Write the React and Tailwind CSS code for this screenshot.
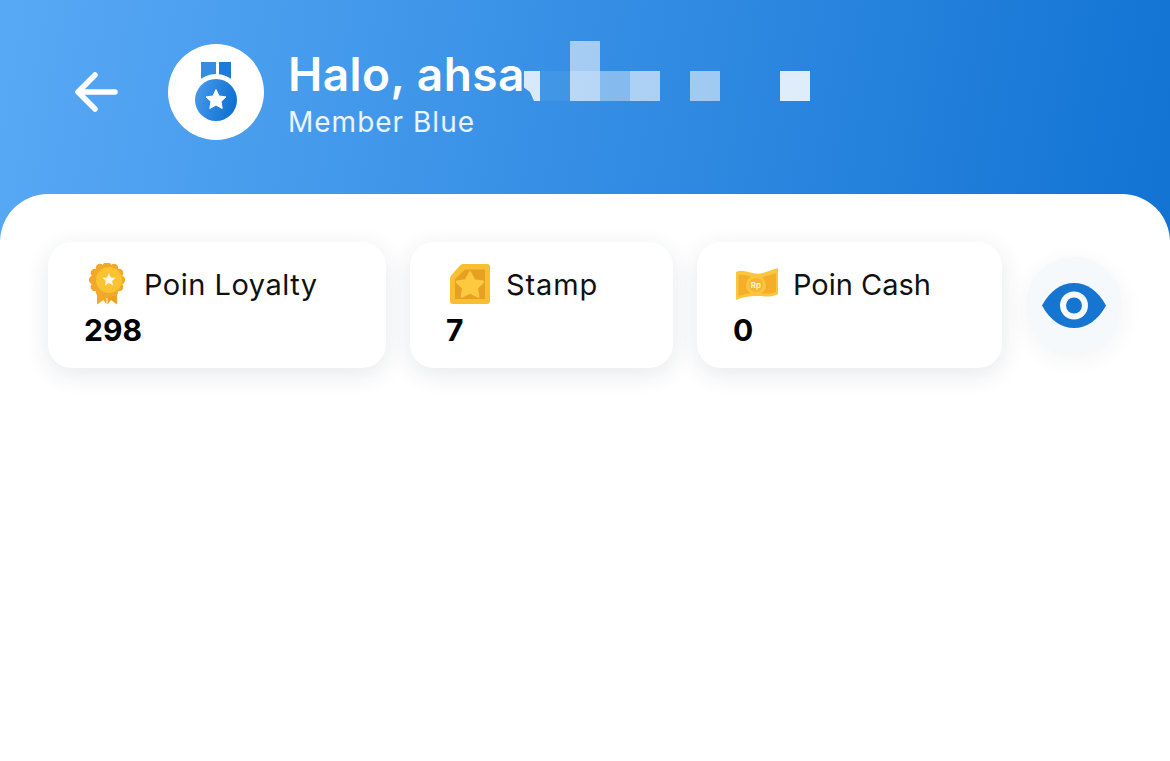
import React from 'react';

const cards = [
    { label: 'Poin Loyalty', value: '298', icon: <LoyaltyIcon />, width: 'w-[338px]', rowClass: 'pl-[2px]', labelClass: 'ml-[17px] tracking-[0.5px]' },
    { label: 'Stamp', value: '7', icon: <StampIcon />, width: 'w-[263px]', rowClass: 'pl-[2px]', labelClass: 'ml-[15px] tracking-[0.9px]' },
    { label: 'Poin Cash', value: '0', icon: <CashIcon />, width: 'w-[305px]', rowClass: 'pl-[1px]', labelClass: 'ml-[14px]' },
];

// censor blocks sitting over the name
const blocks = [
    { className: 'left-[540px] top-[71px] h-[30px] w-[30px] bg-white/5' },
    { className: 'left-[570px] top-[41px] h-[30px] w-[30px] bg-white/55' },
    { className: 'left-[570px] top-[71px] h-[30px] w-[30px] bg-white/65' },
    { className: 'left-[600px] top-[71px] h-[30px] w-[30px] bg-white/40' },
    { className: 'left-[630px] top-[71px] h-[30px] w-[30px] bg-white/60' },
    { className: 'left-[690px] top-[71px] h-[30px] w-[30px] bg-white/55' },
    { className: 'left-[780px] top-[71px] h-[30px] w-[30px] bg-white/85' },
];

const scallops = Array.from({ length: 12 }, (_, i) => {
    const angle = (i * Math.PI) / 6;
    return { cx: 20 + Math.cos(angle) * 14, cy: 17 + Math.sin(angle) * 14 };
});

function LoyaltyIcon() {
    return (
        <svg width="40" height="42" viewBox="0 0 40 42" className="shrink-0">
            <path d="M10 24 L10 41.500 L16.500 37 L19.500 41.500 L19.500 24 Z" fill="#f2a923" />
            <path d="M20.500 24 L20.500 41.500 L24 37 L30 41.500 L30 24 Z" fill="#eea01f" />
            {scallops.map((s, i) => (
                <circle key={i} cx={s.cx} cy={s.cy} r="4.200" fill="#f0a92a" />
            ))}
            <circle cx="20" cy="17" r="14.500" fill="#f0a92a" />
            <circle cx="22" cy="17" r="13" fill="#fbc331" />
            <path d="M22 10 L23.900 14.400 L28.600 14.800 L25.100 17.900 L26.100 22.500 L22 20.100 L17.900 22.500 L18.900 17.900 L15.400 14.800 L20.100 14.400 Z" fill="#fff8e6" strokeLinejoin="round" />
        </svg>
    );
}

function StampIcon() {
    return (
        <svg width="42" height="42" viewBox="0 0 42 42" className="shrink-0">
            <path d="M14 1 H38 Q41 1 41 4 V38 Q41 41 38 41 H4 Q1 41 1 38 V16 Q1 13.500 3 11.500 L10.500 3 Q12 1 14 1 Z" fill="#f9bf31" />
            <path d="M16 6.500 H36 V36 H6 V16 Z" fill="#e7a024" />
            <path d="M21 9.500 L25.200 17.500 L34 18.800 L27.700 25 L29.200 33.500 L21 29.500 L12.800 33.500 L14.300 25 L8 18.800 L16.800 17.500 Z" fill="#fdc93f" stroke="#fdc93f" strokeWidth="2.500" strokeLinejoin="round" />
        </svg>
    );
}

function CashIcon() {
    return (
        <svg width="44" height="34" viewBox="0 0 44 34" className="shrink-0">
            <path d="M1 5 C9 1 18 9 28 6 C34 4 39 2 43 1 V27 C36 31 30 29 22 29 C14 29 8 30 1 33 Z" fill="#fcc53e" />
            <path d="M3.500 8 C11 6 18 13 28 10 C33 9 37 7 41 6 V25 C35 28 29 26 22 26 C14 26 9 27 3.500 29 Z" fill="#f4ae29" />
            <circle cx="21" cy="18" r="10" fill="#fcc53e" />
            <circle cx="21" cy="18" r="7" fill="#f6b62f" />
            <text x="21" y="21" textAnchor="middle" fontSize="8" fontWeight="700" fill="#fff3cf" fontFamily="Inter, sans-serif">Rp</text>
        </svg>
    );
}

function MedalIcon() {
    return (
        <svg width="62" height="66" viewBox="0 0 62 66">
            <defs>
                <linearGradient id="medalFill" x1="0" y1="0" x2="1" y2="0.300">
                    <stop offset="0" stopColor="#4a9dec" />
                    <stop offset="1" stopColor="#1272d3" />
                </linearGradient>
            </defs>
            <rect x="16" y="1" width="15" height="23" fill="#348ce3" />
            <rect x="34" y="1" width="12" height="23" fill="#1d7ad7" />
            <circle cx="31" cy="39" r="26" fill="#fff" />
            <circle cx="31" cy="39" r="21" fill="url(#medalFill)" />
            <path d="M31 28.500 L34 35 L41 35.900 L36 40.500 L37.200 47.500 L31 44 L24.800 47.500 L26 40.500 L21 35.900 L28 35 Z" fill="#fff" stroke="#fff" strokeLinejoin="round" />
        </svg>
    );
}

function PointCard({ label, value, icon, width, rowClass, labelClass }) {
    return (
        <div className={`${width} h-[126px] shrink-0 rounded-[24px] bg-white pl-[37px] pt-[21px] shadow-[0_6px_24px_rgba(30,50,80,0.11)]`}>
            <div className={`${rowClass} flex h-[42px] items-center`}>
                {icon}
                <span className={`${labelClass} text-[29px] leading-none text-[#111]`}>{label}</span>
            </div>
            <div className="mt-[7px] -ml-[1px] text-[30px] font-bold leading-[36px] text-black">{value}</div>
        </div>
    );
}

export default function App() {
    return (
        <div className="relative h-[761px] w-[1170px] overflow-hidden bg-white font-['Inter',sans-serif]">
            <div className="flex h-[240px] items-start bg-[linear-gradient(100deg,#58a9f5,#1273d3)] pl-[75px] pt-[44px]">
                <svg width="43" height="40" viewBox="0 0 43 40" fill="none" stroke="#fff" strokeWidth="5.500" strokeLinecap="round" strokeLinejoin="round" className="mt-[28px]">
                    <path d="M40 20 H4" />
                    <path d="M20 3 L3 20 L20 37" />
                </svg>
                <div className="ml-[50px] flex h-[96px] w-[96px] items-center justify-center rounded-full bg-white pt-[3px]">
                    <MedalIcon />
                </div>
                <div className="ml-[24px] text-white">
                    <div className="text-[46px] font-semibold leading-[60px] tracking-[0.45px]">Halo, ahsa</div>
                    <div className="mt-[1px] text-[28px] leading-[34px] tracking-[1px] text-white/90">Member Blue</div>
                </div>
            </div>

            {blocks.map((block, i) => (
                <div key={i} className={`absolute ${block.className}`} />
            ))}
            <div className="absolute left-[520px] top-[71px] h-[30px] w-[20px] bg-white/80 [clip-path:polygon(20%_0,100%_0,100%_100%,70%_100%,50%_70%,20%_55%)]" />

            <div className="relative -mt-[46px] h-[567px] rounded-t-[48px] bg-white px-[48px] pt-[48px]">
                <div className="flex items-start gap-[24px]">
                    {cards.map(card => (
                        <PointCard key={card.label} {...card} />
                    ))}
                    <div className="mt-[15px] flex h-[96px] w-[96px] items-center justify-center rounded-full bg-[#f6f9fb] shadow-[0_6px_24px_rgba(30,50,80,0.06)]">
                        <svg width="64" height="45" viewBox="0 0 64 45">
                            <path d="M0 22.500 C8 8 19 0 32 0 C45 0 56 8 64 22.500 C56 37 45 45 32 45 C19 45 8 37 0 22.500 Z" fill="#1775d2" />
                            <circle cx="32" cy="22.500" r="14" fill="#f6f9fb" />
                            <circle cx="32" cy="22.500" r="8" fill="#1775d2" />
                        </svg>
                    </div>
                </div>
            </div>
        </div>
    );
}
